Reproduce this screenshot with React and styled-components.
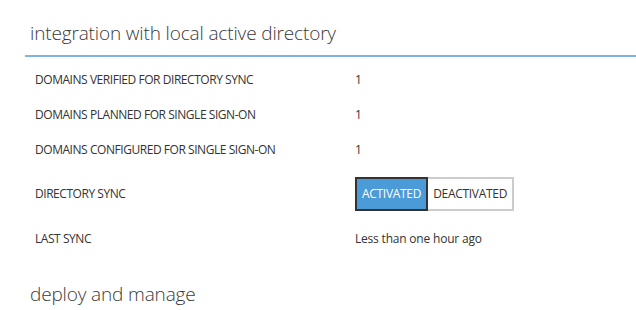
import React from "react";
import styled, { createGlobalStyle } from "styled-components";

const GlobalStyle = createGlobalStyle`
  body {
    margin: 0;
    background: #fff;
    font-family: "Open Sans", "Liberation Sans", sans-serif;
    color: #333;
  }
`;

const Page = styled.div`
  width: 636px;
  height: 310px;
  overflow: hidden;
  padding-top: 19px;
  box-sizing: border-box;
`;

const SectionHeader = styled.div`
  margin-left: 25px;
  padding-left: 5px;
  padding-bottom: 8px;
  border-bottom: 2px solid #7fb4e2;
`;

const SectionTitle = styled.h2`
  margin: 0;
  font-size: 19px;
  font-weight: 300;
  line-height: 28px;
  color: #3a3a3a;
  letter-spacing: -0.15px;
`;

const Props = styled.div`
  display: grid;
  grid-template-columns: 320px auto;
  align-items: center;
  padding: 5px 0 0 35px;
`;

const Label = styled.div`
  font-size: 12px;
  text-transform: uppercase;
  color: #333;
  height: ${(p) => p.$h || 35}px;
  display: flex;
  align-items: center;
  letter-spacing: -0.45px;
`;

const Value = styled.div`
  font-size: 12px;
  color: #333;
  height: ${(p) => p.$h || 35}px;
  display: flex;
  align-items: center;
  letter-spacing: -0.2px;
`;

const Toggle = styled.div`
  display: flex;
`;

const ToggleButton = styled.button`
  font-family: inherit;
  font-size: 12px;
  letter-spacing: -0.3px;
  height: 34px;
  padding: 0 5px;
  margin: 0;
  border: 2px solid ${(p) => (p.$active ? "#333" : "#ccc")};
  background: ${(p) => (p.$active ? "#4a9bd8" : "#fff")};
  color: ${(p) => (p.$active ? "#fff" : "#333")};
  cursor: pointer;
  & + & {
    border-left: none;
  }
`;

const NextSection = styled.div`
  padding: 23px 0 0 30px;
`;

const rows = [
  ["Domains verified for directory sync", "1"],
  ["Domains planned for single sign-on", "1"],
  ["Domains configured for single sign-on", "1"],
];

const App = () => (
  <>
    <GlobalStyle />
    <Page>
      <SectionHeader>
        <SectionTitle>integration with local active directory</SectionTitle>
      </SectionHeader>
      <Props>
        {rows.map(([label, value]) => (
          <React.Fragment key={label}>
            <Label>{label}</Label>
            <Value>{value}</Value>
          </React.Fragment>
        ))}
        <Label $h={53}>Directory sync</Label>
        <Value $h={53}>
          <Toggle>
            <ToggleButton $active>ACTIVATED</ToggleButton>
            <ToggleButton>DEACTIVATED</ToggleButton>
          </Toggle>
        </Value>
        <Label $h={37}>Last sync</Label>
        <Value $h={37}>Less than one hour ago</Value>
      </Props>
      <NextSection>
        <SectionTitle>deploy and manage</SectionTitle>
      </NextSection>
    </Page>
  </>
);

export default App;
